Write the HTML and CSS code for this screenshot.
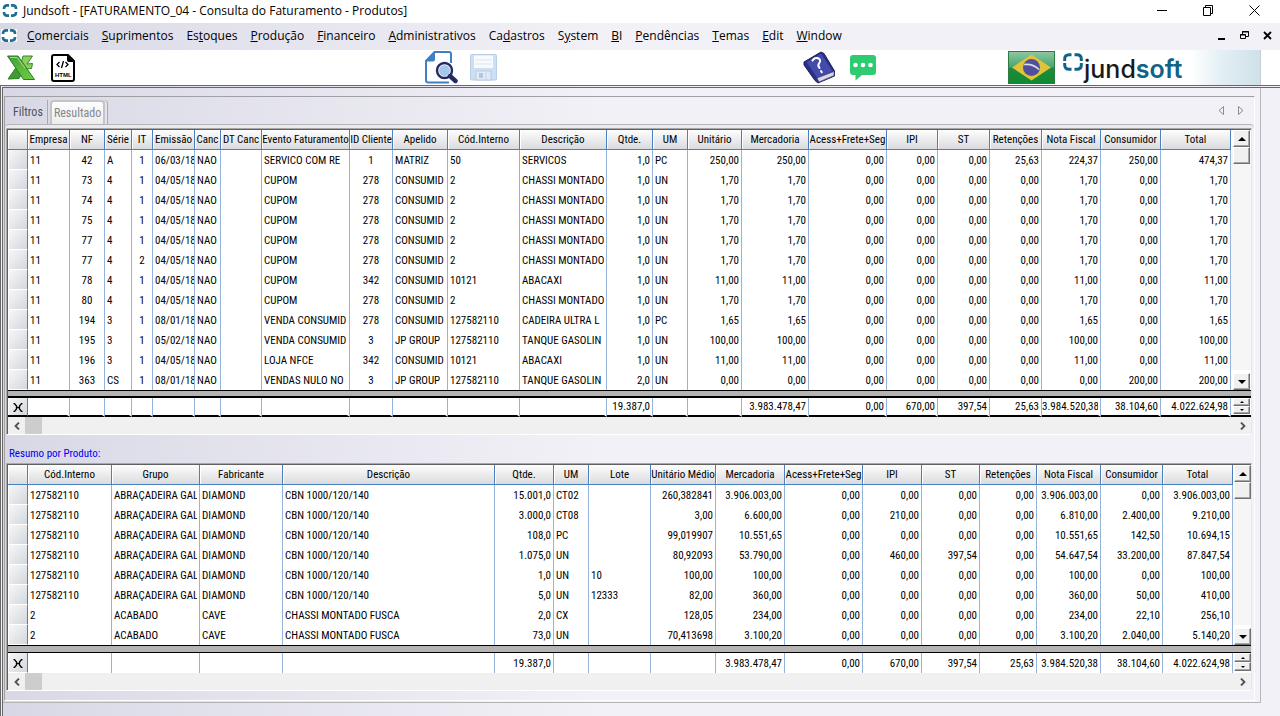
FILE: index.html
```
<!DOCTYPE html>
<html lang="pt-BR">
<head>
<meta charset="utf-8">
<title>Jundsoft - Consulta do Faturamento</title>
<link rel="stylesheet" href="styles.css">
</head>
<body>
<svg class="defs" aria-hidden="true">
  <symbol id="ring" viewBox="0 0 16 14"><path d="M7 1.500H5Q1.500 1.500 1.500 5V5.500M9 1.500H11Q14.500 1.500 14.500 5V5.500M7 12.500H5Q1.500 12.500 1.500 9V8.500M9 12.500H11Q14.500 12.500 14.500 9V8.500" fill="none" stroke="#1f6f92" stroke-width="2.800"/></symbol>
  <symbol id="up" viewBox="0 0 8 4"><path d="M4 0L8 4H0Z"/></symbol>
  <symbol id="down" viewBox="0 0 8 4"><path d="M0 0H8L4 4Z"/></symbol>
  <symbol id="prev" viewBox="0 0 6 8"><path d="M5 0.500L1.500 4L5 7.500" fill="none" stroke="#505050" stroke-width="1.800"/></symbol>
  <symbol id="next" viewBox="0 0 6 8"><path d="M1 0.500L4.500 4L1 7.500" fill="none" stroke="#505050" stroke-width="1.800"/></symbol>
  <symbol id="sum" viewBox="0 0 10 9"><path d="M0.500 0.500H1.500L3.500 3V6L1.500 8.500H0.500M9.500 0.500H8.500L6.500 3V6L8.500 8.500H9.500M3 4.500H7" fill="none" stroke="#000" stroke-width="1.300"/></symbol>
</svg>

<header class="titlebar">
  <svg class="ring"><use href="#ring"/></svg>
  <h1>Jundsoft - [FATURAMENTO_04 - Consulta do Faturamento - Produtos]</h1>
  <div class="winbtns">
    <button aria-label="Minimizar"><svg width="11" height="11" viewBox="0 0 11 11"><path d="M0 5.500H10"/></svg></button>
    <button aria-label="Restaurar"><svg width="11" height="11" viewBox="0 0 11 11"><path d="M0.500 2.500H7.500V10.500H0.500ZM2.500 2.500V0.500H9.500V8.500H7.500"/></svg></button>
    <button aria-label="Fechar"><svg width="11" height="11" viewBox="0 0 11 11"><path d="M0.500 0.500L10.500 10.500M10.500 0.500L0.500 10.500"/></svg></button>
  </div>
</header>

<nav class="menubar">
  <svg class="ring"><use href="#ring"/></svg>
  <button><u>C</u>omerciais</button>
  <button><u>S</u>uprimentos</button>
  <button>Es<u>t</u>oques</button>
  <button><u>P</u>rodução</button>
  <button><u>F</u>inanceiro</button>
  <button><u>A</u>dministrativos</button>
  <button>Ca<u>d</u>astros</button>
  <button>S<u>y</u>stem</button>
  <button><u>B</u>I</button>
  <button><u>P</u>endências</button>
  <button><u>T</u>emas</button>
  <button><u>E</u>dit</button>
  <button><u>W</u>indow</button>
  <div class="mdibtns">
    <button aria-label="Minimizar janela"><svg width="9" height="9" viewBox="0 0 9 9"><path d="M1 8H8" stroke-width="2"/></svg></button>
    <button aria-label="Restaurar janela"><svg width="9" height="9" viewBox="0 0 9 9"><path d="M0.500 3.500H5.500V7.500H0.500ZM0 4H6M2.500 3V0.500H8.500V5.500H6M2 1H9"/></svg></button>
    <button aria-label="Fechar janela"><svg width="9" height="9" viewBox="0 0 9 9"><path d="M1 1L8 8M8 1L1 8" stroke-width="1.800"/></svg></button>
  </div>
</nav>

<div class="toolbar">
  <button aria-label="Excel"><svg width="29" height="26" viewBox="0 0 29 26">
    <defs><linearGradient id="gx" x1="0" y1="0" x2="1" y2="1"><stop offset="0" stop-color="#3f9a3a"/><stop offset=".5" stop-color="#5cb83c"/><stop offset="1" stop-color="#6fca48"/></linearGradient></defs>
    <path d="M16 1H25.500L20 9L25.500 8.500L24.500 13.500L19 14L14 9Z" fill="#8ccf5c" stroke="#2f8a2a"/>
    <path d="M9.500 12L15 18L12 23.500L1 24Z" fill="#3d9c35" stroke="#2a7d24"/>
    <path d="M0.500 1H11L27.500 24.500H16.500Z" fill="url(#gx)" stroke="#2a7d24"/>
    <path d="M3 2.500H10L18 13" fill="none" stroke="#a5dc80"/>
  </svg></button>
  <button class="html" aria-label="HTML"><svg width="24" height="28" viewBox="0 0 24 28">
    <path d="M3 1H17L23 7V25Q23 27 21 27H3Q1 27 1 25V3Q1 1 3 1Z" fill="#fff" stroke="#000" stroke-width="2"/>
    <path d="M16 1L23 8H18Q16 8 16 6Z"/>
    <path d="M8.500 8L6 10.500L8.500 13M14.500 8L17 10.500L14.500 13M12.500 7L10.500 14" fill="none" stroke="#000" stroke-width="1.300"/>
    <text x="4" y="23">HTML</text>
  </svg></button>
  <i class="gap gap-a"></i>
  <button aria-label="Consultar"><svg width="33" height="33" viewBox="0 0 33 33">
    <path d="M24 31.500H3.500Q1 31.500 1 29V10L9.500 1H24Q26 1 26 3V12" fill="none" stroke="#3f80c4" stroke-width="2"/>
    <path d="M0.500 10.500L10 0.500V8.500Q10 10.500 8 10.500Z" fill="#3f80c4"/>
    <circle cx="19.500" cy="19.500" r="9.500" fill="#fff"/>
    <circle cx="19.500" cy="19.500" r="5.500" fill="#a3c9ea"/>
    <circle cx="19.500" cy="19.500" r="7.500" fill="none" stroke="#262a63" stroke-width="2.400"/>
    <path d="M25 25L30.500 30" stroke="#262a63" stroke-width="4.400" stroke-linecap="round"/>
  </svg></button>
  <button class="save" aria-label="Salvar" disabled><svg width="27" height="27" viewBox="0 0 27 27">
    <rect x=".5" y=".5" width="26" height="25.500" rx="1" fill="#cddff2" stroke="#b9cde6"/>
    <path d="M4 1.500H23V14H4Z" fill="#f8fafd"/><path d="M5 6H22M5 10H22" stroke="#dde6f1"/>
    <path d="M6 17H21V26H6Z" fill="#e2ebf5" stroke="#b8cbe2"/><rect x="9" y="19" width="4" height="5" fill="#b2c8e2"/><path d="M16 18V26" stroke="#c3d3e6"/>
  </svg></button>
  <i class="gap gap-b"></i>
  <button aria-label="Ajuda"><svg width="33" height="33" viewBox="0 0 33 33">
    <path d="M1 11L18 1L21 2.500L31.500 20L31.500 25L15 32L12 29.500L1 14Z" fill="#2a2f86" stroke="#1c1f5a"/>
    <path d="M14 27L31 20.500V24.500L16 31Z" fill="#d9d9e6" stroke="#55568a" stroke-width=".8"/>
    <path d="M3.500 11L18 2.500L29.500 20L14 26.500Z" fill="#434bab"/>
    <path d="M9.500 9.500Q11 6.500 14.500 7Q19 8.500 16 12.500Q14.500 14.500 16.500 17M18 20L18.800 21.200" fill="none" stroke="#fff" stroke-width="2" stroke-linecap="round"/>
  </svg></button>
  <button class="chat" aria-label="Mensagens"><svg width="26" height="26" viewBox="0 0 26 26">
    <path d="M3 0H23Q26 0 26 3V17Q26 20 23 20H12L5.500 25.500V20H3Q0 20 0 17V3Q0 0 3 0Z" fill="#2ecc71"/>
    <g fill="#fff"><circle cx="5.500" cy="10" r="2.300"/><circle cx="13" cy="10" r="2.300"/><circle cx="20.500" cy="10" r="2.300"/></g>
  </svg></button>
  <i class="gap gap-c"></i>
  <button aria-label="Português (Brasil)"><svg width="47" height="33" viewBox="0 0 47 33">
    <defs><linearGradient id="gf" x1="0" y1="0" x2="0" y2="1"><stop offset="0" stop-color="#8fc8a4"/><stop offset=".48" stop-color="#4ca56a"/><stop offset=".52" stop-color="#1f8b3c"/><stop offset="1" stop-color="#0f8a32"/></linearGradient></defs>
    <rect x=".5" y=".5" width="46" height="32" fill="url(#gf)" stroke="#2d7a44"/>
    <path d="M23.500 3.500L43 16.500L23.500 29.500L4 16.500Z" fill="#dfc33c"/>
    <circle cx="23.500" cy="16.500" r="8.500" fill="#4f4f9e"/>
    <path d="M16 13.500Q25 12.500 31 18.500" fill="none" stroke="#d9dbe8" stroke-width="1.600"/>
  </svg></button>
  <div class="brand">
    <svg width="20" height="18" viewBox="0 0 20 18"><path d="M8.500 1.700H6Q1.700 1.700 1.700 6V8M11.500 1.700H14Q18.300 1.700 18.300 6V8M8.500 16.300H6Q1.700 16.300 1.700 12V10M11.500 16.300H14Q18.300 16.300 18.300 12V10" fill="none" stroke="#0f6288" stroke-width="3"/></svg>
    <span>jund<b>soft</b></span>
  </div>
</div>

<main class="workspace">
<div class="form">
<section class="panel">
  <div class="tabs" role="tablist">
    <button class="tab" role="tab" aria-selected="false">Filtros</button>
    <button class="tab" role="tab" aria-selected="true">Resultado</button>
    <div class="tabnav">
      <button aria-label="Aba anterior"><svg width="6" height="9" viewBox="0 0 6 9"><path d="M5.500 0.500V8.500L1 4.500Z"/></svg></button>
      <button aria-label="Próxima aba"><svg width="6" height="9" viewBox="0 0 6 9"><path d="M0.500 0.500V8.500L5 4.500Z"/></svg></button>
    </div>
  </div>
  <div class="pane">
    <div class="grid">
      <table class="data items">
        <colgroup><col width="20"><col width="42"><col width="35"><col width="27"><col width="21"><col width="42"><col width="26"><col width="41"><col width="88"><col width="43"><col width="55"><col width="72"><col width="87"><col width="46"><col width="35"><col width="54"><col width="67"><col width="78"><col width="51"><col width="52"><col width="52"><col width="59"><col width="60"><col width="70"><col width="20"></colgroup>
        <thead><tr><th></th><th>Empresa<th>NF<th>Série<th>IT<th>Emissão<th>Canc<th>DT Canc<th>Evento Faturamento<th>ID Cliente<th>Apelido<th>Cód.Interno<th>Descrição<th>Qtde.<th>UM<th>Unitário<th>Mercadoria<th>Acess+Frete+Seg<th>IPI<th>ST<th>Retenções<th>Nota Fiscal<th>Consumidor<th>Total<td class="bar"><button class="arrow" aria-label="Rolar para cima"><svg><use href="#up"/></svg></button></tr></thead>
        <tbody>
        <tr><th><td>11<td>42<td>A<td>1<td>06/03/18<td>NAO<td><td>SERVICO COM RE<td>1<td>MATRIZ<td>50<td>SERVICOS<td>1,0<td>PC<td>250,00<td>250,00<td>0,00<td>0,00<td>0,00<td>25,63<td>224,37<td>250,00<td>474,37<td class="bar track" rowspan="11"><div class="thumb"></div></tr>
        <tr><th><td>11<td>73<td>4<td>1<td>04/05/18<td>NAO<td><td>CUPOM<td>278<td>CONSUMID<td>2<td>CHASSI MONTADO<td>1,0<td>UN<td>1,70<td>1,70<td>0,00<td>0,00<td>0,00<td>0,00<td>1,70<td>0,00<td>1,70</tr>
        <tr><th><td>11<td>74<td>4<td>1<td>04/05/18<td>NAO<td><td>CUPOM<td>278<td>CONSUMID<td>2<td>CHASSI MONTADO<td>1,0<td>UN<td>1,70<td>1,70<td>0,00<td>0,00<td>0,00<td>0,00<td>1,70<td>0,00<td>1,70</tr>
        <tr><th><td>11<td>75<td>4<td>1<td>04/05/18<td>NAO<td><td>CUPOM<td>278<td>CONSUMID<td>2<td>CHASSI MONTADO<td>1,0<td>UN<td>1,70<td>1,70<td>0,00<td>0,00<td>0,00<td>0,00<td>1,70<td>0,00<td>1,70</tr>
        <tr><th><td>11<td>77<td>4<td>1<td>04/05/18<td>NAO<td><td>CUPOM<td>278<td>CONSUMID<td>2<td>CHASSI MONTADO<td>1,0<td>UN<td>1,70<td>1,70<td>0,00<td>0,00<td>0,00<td>0,00<td>1,70<td>0,00<td>1,70</tr>
        <tr><th><td>11<td>77<td>4<td>2<td>04/05/18<td>NAO<td><td>CUPOM<td>278<td>CONSUMID<td>2<td>CHASSI MONTADO<td>1,0<td>UN<td>1,70<td>1,70<td>0,00<td>0,00<td>0,00<td>0,00<td>1,70<td>0,00<td>1,70</tr>
        <tr><th><td>11<td>78<td>4<td>1<td>04/05/18<td>NAO<td><td>CUPOM<td>342<td>CONSUMID<td>10121<td>ABACAXI<td>1,0<td>UN<td>11,00<td>11,00<td>0,00<td>0,00<td>0,00<td>0,00<td>11,00<td>0,00<td>11,00</tr>
        <tr><th><td>11<td>80<td>4<td>1<td>04/05/18<td>NAO<td><td>CUPOM<td>278<td>CONSUMID<td>2<td>CHASSI MONTADO<td>1,0<td>UN<td>1,70<td>1,70<td>0,00<td>0,00<td>0,00<td>0,00<td>1,70<td>0,00<td>1,70</tr>
        <tr><th><td>11<td>194<td>3<td>1<td>08/01/18<td>NAO<td><td>VENDA CONSUMID<td>278<td>CONSUMID<td>127582110<td>CADEIRA ULTRA L<td>1,0<td>PC<td>1,65<td>1,65<td>0,00<td>0,00<td>0,00<td>0,00<td>1,65<td>0,00<td>1,65</tr>
        <tr><th><td>11<td>195<td>3<td>1<td>05/02/18<td>NAO<td><td>VENDA CONSUMID<td>3<td>JP GROUP<td>127582110<td>TANQUE GASOLIN<td>1,0<td>UN<td>100,00<td>100,00<td>0,00<td>0,00<td>0,00<td>0,00<td>100,00<td>0,00<td>100,00</tr>
        <tr><th><td>11<td>196<td>3<td>1<td>04/05/18<td>NAO<td><td>LOJA NFCE<td>342<td>CONSUMID<td>10121<td>ABACAXI<td>1,0<td>UN<td>11,00<td>11,00<td>0,00<td>0,00<td>0,00<td>0,00<td>11,00<td>0,00<td>11,00</tr>
        <tr><th><td>11<td>363<td>CS<td>1<td>08/01/18<td>NAO<td><td>VENDAS NULO NO<td>3<td>JP GROUP<td>127582110<td>TANQUE GASOLIN<td>2,0<td>UN<td>0,00<td>0,00<td>0,00<td>0,00<td>0,00<td>0,00<td>0,00<td>200,00<td>200,00<td class="bar"><button class="arrow" aria-label="Rolar para baixo"><svg><use href="#down"/></svg></button></tr>
        </tbody>
        <tfoot>
        <tr class="split"><td colspan="25"></tr>
        <tr class="total"><th><svg class="sum"><use href="#sum"/></svg><td><td><td><td><td><td><td><td><td><td><td><td><td>19.387,0<td><td><td>3.983.478,47<td>0,00<td>670,00<td>397,54<td>25,63<td>3.984.520,38<td>38.104,60<td>4.022.624,98<td class="bar"><div class="spin"><button aria-label="Subir"><svg><use href="#up"/></svg></button><button aria-label="Descer"><svg><use href="#down"/></svg></button></div></tr>
        </tfoot>
      </table>
      <div class="hscroll"><button aria-label="Rolar à esquerda"><svg><use href="#prev"/></svg></button><div class="hthumb"></div><button aria-label="Rolar à direita"><svg><use href="#next"/></svg></button></div>
    </div>

    <h2>Resumo por Produto:</h2>

    <div class="grid">
      <table class="data summary">
        <colgroup><col width="20"><col width="84"><col width="88"><col width="83"><col width="212"><col width="59"><col width="35"><col width="62"><col width="65"><col width="69"><col width="78"><col width="59"><col width="58"><col width="57"><col width="64"><col width="62"><col width="70"><col width="18"></colgroup>
        <thead><tr><th></th><th>Cód.Interno<th>Grupo<th>Fabricante<th>Descrição<th>Qtde.<th>UM<th>Lote<th>Unitário Médio<th>Mercadoria<th>Acess+Frete+Seg<th>IPI<th>ST<th>Retenções<th>Nota Fiscal<th>Consumidor<th>Total<td class="bar"><button class="arrow" aria-label="Rolar para cima"><svg><use href="#up"/></svg></button></tr></thead>
        <tbody>
        <tr><th><td>127582110<td>ABRAÇADEIRA GAL<td>DIAMOND<td>CBN 1000/120/140<td>15.001,0<td>CT02<td><td>260,382841<td>3.906.003,00<td>0,00<td>0,00<td>0,00<td>0,00<td>3.906.003,00<td>0,00<td>3.906.003,00<td class="bar track" rowspan="7"><div class="thumb"></div></tr>
        <tr><th><td>127582110<td>ABRAÇADEIRA GAL<td>DIAMOND<td>CBN 1000/120/140<td>3.000,0<td>CT08<td><td>3,00<td>6.600,00<td>0,00<td>210,00<td>0,00<td>0,00<td>6.810,00<td>2.400,00<td>9.210,00</tr>
        <tr><th><td>127582110<td>ABRAÇADEIRA GAL<td>DIAMOND<td>CBN 1000/120/140<td>108,0<td>PC<td><td>99,019907<td>10.551,65<td>0,00<td>0,00<td>0,00<td>0,00<td>10.551,65<td>142,50<td>10.694,15</tr>
        <tr><th><td>127582110<td>ABRAÇADEIRA GAL<td>DIAMOND<td>CBN 1000/120/140<td>1.075,0<td>UN<td><td>80,92093<td>53.790,00<td>0,00<td>460,00<td>397,54<td>0,00<td>54.647,54<td>33.200,00<td>87.847,54</tr>
        <tr><th><td>127582110<td>ABRAÇADEIRA GAL<td>DIAMOND<td>CBN 1000/120/140<td>1,0<td>UN<td>10<td>100,00<td>100,00<td>0,00<td>0,00<td>0,00<td>0,00<td>100,00<td>0,00<td>100,00</tr>
        <tr><th><td>127582110<td>ABRAÇADEIRA GAL<td>DIAMOND<td>CBN 1000/120/140<td>5,0<td>UN<td>12333<td>82,00<td>360,00<td>0,00<td>0,00<td>0,00<td>0,00<td>360,00<td>50,00<td>410,00</tr>
        <tr><th><td>2<td>ACABADO<td>CAVE<td>CHASSI MONTADO FUSCA<td>2,0<td>CX<td><td>128,05<td>234,00<td>0,00<td>0,00<td>0,00<td>0,00<td>234,00<td>22,10<td>256,10</tr>
        <tr><th><td>2<td>ACABADO<td>CAVE<td>CHASSI MONTADO FUSCA<td>73,0<td>UN<td><td>70,413698<td>3.100,20<td>0,00<td>0,00<td>0,00<td>0,00<td>3.100,20<td>2.040,00<td>5.140,20<td class="bar"><button class="arrow" aria-label="Rolar para baixo"><svg><use href="#down"/></svg></button></tr>
        </tbody>
        <tfoot>
        <tr class="split"><td colspan="18"></tr>
        <tr class="total"><th><svg class="sum"><use href="#sum"/></svg><td><td><td><td><td>19.387,0<td><td><td><td>3.983.478,47<td>0,00<td>670,00<td>397,54<td>25,63<td>3.984.520,38<td>38.104,60<td>4.022.624,98<td class="bar"><div class="spin"><button aria-label="Subir"><svg><use href="#up"/></svg></button><button aria-label="Descer"><svg><use href="#down"/></svg></button></div></tr>
        </tfoot>
      </table>
      <div class="hscroll"><button aria-label="Rolar à esquerda"><svg><use href="#prev"/></svg></button><div class="hthumb"></div><button aria-label="Rolar à direita"><svg><use href="#next"/></svg></button></div>
    </div>
  </div>
</section>
</div>
</main>
</body>
</html>
```
FILE: styles.css
```
* { box-sizing: border-box; }
:root {
  --shade: linear-gradient(to right, #d8d7e5 0, #dddde9 100px, #f2f1f7 600px);
  --narrow: "Roboto Condensed", "Liberation Sans Narrow", "Liberation Sans", sans-serif;
}
body {
  margin: 0;
  min-height: 100vh;
  display: flex;
  flex-direction: column;
  background: #fff;
  color: #000;
  font: 12px "Open Sans", "Noto Sans", sans-serif;
}
.defs { display: none; }
svg { display: block; }
button {
  margin: 0;
  padding: 0;
  border: 0;
  background: none;
  color: inherit;
  font: inherit;
  display: flex;
  align-items: center;
  justify-content: center;
}
h1, h2 { margin: 0; font: inherit; }
.ring { width: 16px; height: 13px; flex: none; background: #fff; }

.titlebar { display: flex; align-items: center; height: 23px; padding: 0 20px 2px 2px; gap: 5px; }
.winbtns { margin-left: auto; display: flex; gap: 35px; }
.winbtns path { fill: none; stroke: #000; }

.menubar { display: flex; align-items: center; height: 27px; padding: 0 8px 2px 1px; gap: 13px; background: var(--shade); }
.menubar .ring { margin-right: -3px; }
.menubar > button { display: block; }
.menubar u { text-underline-offset: 1px; }
.mdibtns { margin-left: auto; display: flex; gap: 14px; }
.mdibtns path { fill: none; stroke: #000; }

.toolbar {
  display: flex;
  align-items: center;
  height: 35px;
  padding-left: 7px;
  padding-right: 19px;
}
.html { margin-left: 15px; }
.html text { font: 700 6px "Liberation Sans", sans-serif; }
.save { margin-left: 12px; }
.chat { margin-left: 14px; }
.gap-a { flex: 350; }
.gap-b { flex: 306; }
.gap-c { flex: 132; }
.brand {
  display: flex;
  align-items: flex-start;
  width: 199px;
  height: 35px;
  margin-left: 7px;
  padding-top: 3px;
  border-right: 1px solid #c8ccd4;
  background: linear-gradient(to right, #fff 65%, #e4eff4 80%, #cfe1e9);
}
.brand svg { margin: 0 1px 0 1px; }
.brand span { font: 500 25px/32px "Inter", sans-serif; color: #1a1a1c; }
.brand b { font-weight: 600; color: #0f6288; }

.workspace {
  flex: 1;
  border-top: 3px double #686868;
  border-left: 3px double #686868;
  padding-right: 19px;
  background: var(--shade);
}
.form { padding: 8px 5px 1px 1px; border-right: 1px solid #b8b8bc; border-bottom: 1px solid #b4b4ba; }
.panel { border: 1px solid #a0a0a4; border-right-color: #fff; border-bottom-color: #fff; }

.tabs { display: flex; align-items: flex-end; height: 27px; font: 12px var(--narrow); }
.tab { height: 24px; padding: 0 2px; color: #505058; }
.tab:first-child { padding: 0 4px 0 8px; border-right: 1px solid #a8a8b0; }
.tab[aria-selected="true"] {
  margin-left: 2px;
  border: 2px solid #c4c4c8;
  border-bottom: 0;
  border-radius: 4px 4px 0 0;
  background: linear-gradient(#fdfdfd, #ededed);
  color: #85858c;
  box-shadow: 2px 0 0 #e4e4ea, 3px 0 0 #a8a8b0;
}
.tabnav { margin-left: auto; display: flex; gap: 14px; padding: 0 10px 9px 0; }
.tabnav path { fill: none; stroke: #8c8c90; }

.pane { padding: 3px 2px 9px 1px; border-top: 1px solid #b4b4b8; border-radius: 4px 4px 0 0; box-shadow: inset 0 4px 0 #ebebed; }
h2 { padding: 9px 3px 0; height: 28px; font: 11px/19px var(--narrow); color: #0000f0; }

.grid { border: 1px solid #a8a8a8; border-right-color: #e8e8e8; border-bottom-color: #fff; box-shadow: inset 1px 1px 0 #606060; padding: 1px 0 0 1px; }
.data { width: 100%; table-layout: fixed; border-collapse: separate; border-spacing: 0; background: #fff; font: 11px/18px var(--narrow); }
.data tr { height: 20px; }
.data td, .data th {
  height: 20px;
  padding: 1px 0 0;
  overflow: hidden;
  white-space: nowrap;
  font-weight: 400;
  text-align: right;
}
.data td {
  border-right: 3px solid transparent;
  background: linear-gradient(#94b4dc, #94b4dc) right / 1px 100% no-repeat border-box;
}
.data th { border-right: 1px solid #4a80c0; }
.data thead th {
  border-bottom: 1px solid #4a80c0;
  background: linear-gradient(#fdfdfd, #dadbde);
  box-shadow: inset 1px 0 0 #fff;
  text-align: center;
}
.data tbody th, .total th { background: linear-gradient(135deg, #f8f8f9, #d3d7dc); border-bottom: 1px solid #fff; box-shadow: inset 1px 0 0 #fff; }

.items tbody td:nth-child(-n+13), .items tbody td:nth-child(15),
.summary tbody td:nth-child(-n+5), .summary tbody td:nth-child(7), .summary tbody td:nth-child(8) { padding-left: 2px; text-align: left; }
.items tbody td:nth-child(3), .items tbody td:nth-child(5), .items tbody td:nth-child(10) { text-align: center; }
.items tbody td:nth-child(6), .items tbody td:nth-child(11) { border-right-width: 1px; background-image: linear-gradient(#94b4dc, #94b4dc); }

.data .bar { border: 0; padding: 0 1px 0 2px; background: #fff; overflow: visible; vertical-align: top; }
.summary .bar { padding: 0 1px 0 1px; }
.data .track { background: #f6f6f6; }
.arrow, .thumb, .spin button {
  width: 17px;
  height: 17px;
  background: #f0f0f0;
  border: 1px solid #fff;
  border-right-color: #707070;
  border-bottom-color: #707070;
  box-shadow: inset -1px -1px 0 #a8a8a8;
}
.thumb { margin-top: -3px; }
tbody .arrow { margin-top: 3px; }
.arrow svg { width: 8px; height: 4px; }
.spin button { height: 9px; }
.spin svg { width: 4px; height: 2px; }

.data .split, .data .split td { height: 8px; }
.data .split td { padding: 0; border: solid #000; border-width: 1px 0; background: #b4b4b4; line-height: 0; }
.sum { width: 10px; height: 9px; margin: 0 auto; }
.items .total, .items .total td, .items .total th { height: 19px; line-height: 16px; }
.items .total td, .items .total th { border-bottom: 2px solid #000; }
.items .split td { border-bottom-width: 2px; }
.items .spin button { height: 8px; }

.hscroll { display: flex; align-items: stretch; height: 17px; background: #f0f0f0; }
.hscroll button { width: 17px; }
.hscroll button:last-child { margin-left: auto; }
.hscroll svg { width: 6px; height: 8px; }
.hthumb { width: 17px; background: #cdcdcd; }
```
